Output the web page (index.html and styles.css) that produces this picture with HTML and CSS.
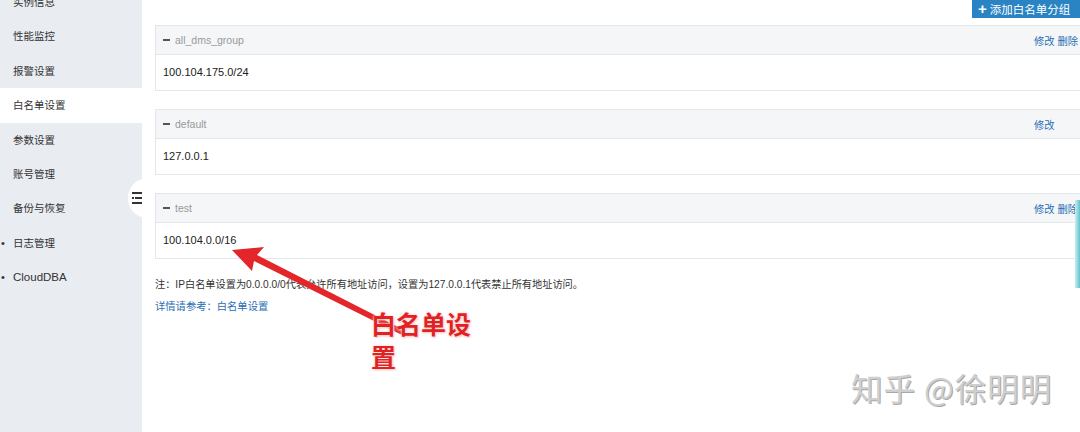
FILE: index.html
```html
<!DOCTYPE html>
<html lang="zh">
<head>
<meta charset="utf-8">
<link rel="stylesheet" href="styles.css">
</head>
<body>
<div class="page">
  <aside class="sidebar">
    <ul class="menu">
      <li class="item">实例信息</li>
      <li class="item">性能监控</li>
      <li class="item">报警设置</li>
      <li class="item active">白名单设置</li>
      <li class="item">参数设置</li>
      <li class="item">账号管理</li>
      <li class="item">备份与恢复</li>
      <li class="item sub"><span class="dot">•</span>日志管理</li>
      <li class="item sub"><span class="dot">•</span><span class="latin">CloudDBA</span></li>
    </ul>
    <div class="handle">
      <svg width="10" height="14" viewBox="0 0 10 14"><rect x="0" y="1" width="10" height="2" fill="#333"/><rect x="0" y="6" width="2" height="2" fill="#333"/><rect x="3" y="6" width="7" height="2" fill="#333"/><rect x="0" y="11" width="10" height="2" fill="#333"/></svg>
    </div>
  </aside>
  <main class="main">
    <div class="toolbar">
      <button class="btn"><span class="plus">+</span>添加白名单分组</button>
    </div>
    <section class="panel">
      <div class="panel-head"><span class="title"><span class="minus"></span>all_dms_group</span><span class="actions"><a>修改</a> <a>删除</a></span></div>
      <div class="panel-body">100.104.175.0/24</div>
    </section>
    <section class="panel">
      <div class="panel-head"><span class="title"><span class="minus"></span>default</span><span class="actions"><a>修改</a><span class="hidden-a"> 删除</span></span></div>
      <div class="panel-body">127.0.0.1</div>
    </section>
    <section class="panel">
      <div class="panel-head"><span class="title"><span class="minus"></span>test</span><span class="actions"><a>修改</a> <a>删除</a></span></div>
      <div class="panel-body">100.104.0.0/16</div>
    </section>
    <p class="note">注：IP白名单设置为0.0.0.0/0代表允许所有地址访问，设置为127.0.0.1代表禁止所有地址访问。</p>
    <p class="ref"><a>详情请参考：白名单设置</a></p>
  </main>
  <div class="edge-bar"></div>
  <svg class="arrow" width="200" height="120" viewBox="0 0 200 120">
    <polygon points="2,12 34,9 27,17 174,92 172,97 24,23 22,33" fill="#e3262a"/>
  </svg>
  <div class="callout">白名单设置</div>
  <div class="watermark">知乎 @徐明明</div>
</div>
</body>
</html>
```
FILE: styles.css
```css
* { box-sizing: border-box; }
html, body { margin: 0; padding: 0; }
body {
  width: 1080px;
  height: 432px;
  overflow: hidden;
  background: #fff;
  font-family: "Liberation Sans", "Noto Sans CJK SC", sans-serif;
  font-size: 12px;
  color: #333;
}
.page {
  position: relative;
  display: flex;
  width: 1080px;
  height: 432px;
  overflow: hidden;
}
.sidebar {
  position: relative;
  width: 142px;
  flex: 0 0 142px;
  background: #e9ecf1;
  height: 432px;
}
.menu {
  list-style: none;
  margin: -15px 0 0 0;
  padding: 0;
}
.item {
  height: 34.4px;
  line-height: 34.4px;
  padding-left: 13px;
  color: #333;
  font-size: 10.5px;
  position: relative;
}
.latin { font-size: 11.5px; }
.item.active { background: #fff; }
.dot {
  position: absolute;
  left: 1px;
  top: 0;
  font-size: 11px;
  color: #333;
}
.handle {
  position: absolute;
  left: 128px;
  top: 178px;
  width: 22px;
  height: 40px;
  border-radius: 20px 0 0 20px;
  background: #fff;
  display: flex;
  align-items: center;
  padding-left: 4px;
}
.main {
  flex: 0 0 auto;
  width: 946px;
  padding-left: 13px;
}
.toolbar {
  display: flex;
  justify-content: flex-end;
  height: 25px;
}
.btn {
  margin-top: -12px;
  height: 30px;
  width: 116px;
  border: 0;
  background: #2a84c4;
  color: #fff;
  font-family: "Liberation Sans", "Noto Sans CJK SC", sans-serif;
  font-size: 11.5px;
  padding: 11px 0 0 6px;
  text-align: left;
}
.plus {
  font-weight: bold;
  font-size: 15px;
  margin-right: 3px;
}
.panel {
  border: 1px solid #e3e6eb;
  margin-bottom: 18px;
}
.panel-head {
  height: 29px;
  background: #f5f6f8;
  border-bottom: 1px solid #e3e6eb;
  display: flex;
  align-items: center;
  justify-content: space-between;
  padding: 0 9px 0 7px;
  font-size: 10.5px;
}
.title { color: #999; display: flex; align-items: center; }
.minus {
  display: inline-block;
  width: 7px;
  height: 2px;
  background: #555;
  margin-right: 5px;
}
.actions { font-size: 10.3px; }
.actions a { color: #2a6fb4; }
.hidden-a { visibility: hidden; }
.panel-body {
  height: 35px;
  line-height: 35px;
  padding-left: 7px;
  color: #222;
  font-size: 11px;
}
.note { margin: 7px 0 0 0; line-height: 16px; font-size: 10.2px; }
.ref { margin: 6px 0 0 0; line-height: 16px; font-size: 10.3px; }
.ref a { color: #2a6fb4; }
.edge-bar {
  position: absolute;
  right: 0;
  top: 200px;
  width: 5px;
  height: 88px;
  background: linear-gradient(to right, #cdeef0, #5ec3cf);
}
.arrow {
  position: absolute;
  left: 230px;
  top: 238px;
}
.callout {
  position: absolute;
  left: 371px;
  top: 307px;
  width: 110px;
  font-family: "Noto Sans CJK SC", sans-serif;
  font-weight: 700;
  font-size: 25px;
  line-height: 33px;
  color: #e02222;
  text-shadow: 0 0 2px #fff, 0 0 3px #fbb, 1px 1px 2px #f4c0c0;
}
.watermark {
  position: absolute;
  left: 851px;
  top: 364px;
  font-family: "Noto Sans CJK SC", sans-serif;
  font-size: 31.5px;
  color: #cfcfcf;
  text-shadow: 1px 1px 0 #a8a8a8;
  letter-spacing: 1px;
}
```
